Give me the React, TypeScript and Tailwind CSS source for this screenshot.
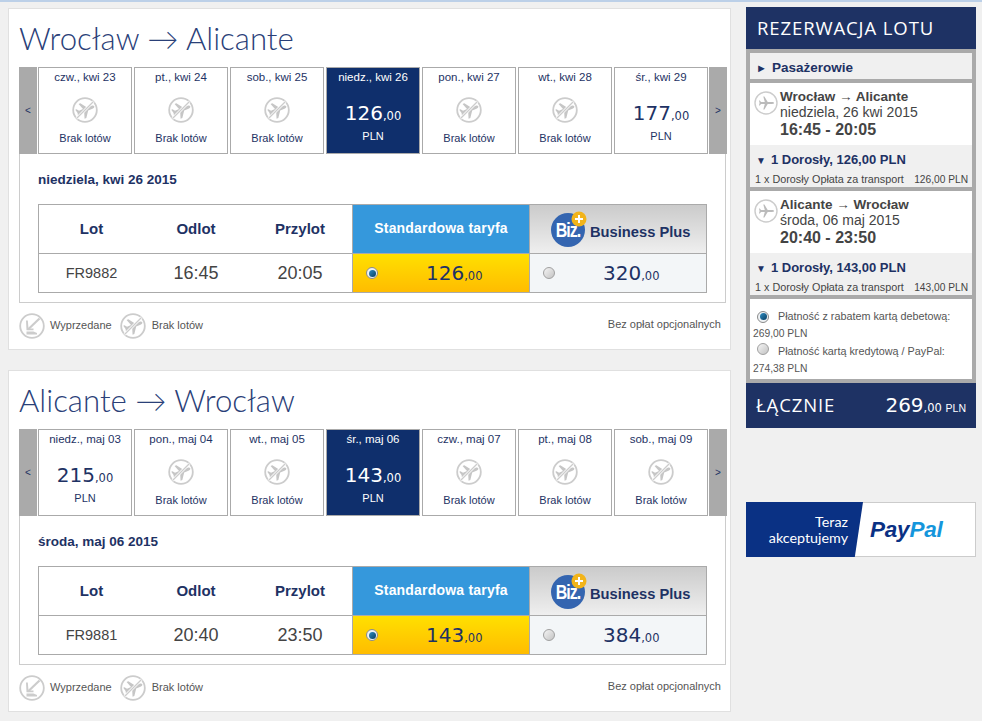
const sans = "font-['Liberation_Sans',Arial,sans-serif]";

function NoFlightIcon({ size = 26 }: { size?: number }) {
  return (
    <svg width={size} height={size} viewBox="0 0 26 26" className="shrink-0">
      <circle cx="13" cy="13" r="11.800" fill="#fff" stroke="#ccc" strokeWidth="1.800" />
      <path
        transform="rotate(-22 13 13)"
        d="M23 13c0-1-1.200-1.600-2.600-1.600h-4.600L11.200 5H9.300l2.200 6.400H7.200L5.400 9.200H4l1 3.800-1 3.800h1.400l1.800-2.200h4.300L9.300 21h1.900l4.600-6.400h4.600C21.800 14.600 23 14 23 13z"
        fill="#c6c6c6"
      />
      <path d="M21.500 4.500 4.500 21.500" stroke="#fff" strokeWidth="2.600" />
      <path d="M21.500 4.500 4.500 21.500" stroke="#ccc" strokeWidth="1.200" />
    </svg>
  );
}

function SoldOutIcon() {
  return (
    <svg width="26" height="26" viewBox="0 0 26 26" className="shrink-0">
      <circle cx="13" cy="13" r="11.800" fill="#fff" stroke="#ccc" strokeWidth="1.800" />
      <path d="M20.500 5.500 9 16.500" stroke="#ccc" strokeWidth="2.200" />
      <path d="M7 7.500h1.800L9.500 15.500h5v1.800H7.500z" fill="#ccc" />
      <path d="M7.500 18.500h7l3.500 1.500v1.500H7.500z" fill="#ccc" />
    </svg>
  );
}

function PlaneIcon() {
  return (
    <svg width="24" height="24" viewBox="0 0 24 24" className="shrink-0">
      <circle cx="12" cy="12" r="11" fill="#fff" stroke="#ccc" strokeWidth="1.400" />
      <path
        d="M20 12c0-.6-.8-.9-1.800-.9h-4.500L10.400 5.500H9.300l1.500 5.600H7L5.800 9.400H5l.6 2.600-.6 2.600h.8L7 12.900h3.800L9.300 18.500h1.100l3.300-5.600h4.500c1 0 1.800-.3 1.800-.9z"
        fill="#bbb"
      />
    </svg>
  );
}

function Radio({ checked }: { checked?: boolean }) {
  return (
    <span
      className={
        checked
          ? "inline-flex w-[12px] h-[12px] shrink-0 items-center justify-center rounded-full border border-[#8a8a8a] bg-[#eef2f5]"
          : "inline-block w-[12px] h-[12px] shrink-0 rounded-full border border-[#a0a0a0] bg-gradient-to-br from-[#f4f4f4] to-[#c4c4c4]"
      }
    >
      {checked && <span className="block w-[7px] h-[7px] rounded-full bg-gradient-to-br from-[#2f8fc4] to-[#0b3f63]" />}
    </span>
  );
}

function Price({ value, dark }: { value: string; dark?: boolean }) {
  return (
    <span className={`font-['DejaVu_Sans',sans-serif] ${dark ? "text-white" : "text-[#1e3264]"}`}>
      <span className="text-[20px] leading-none">{value}</span>
      <span className="text-[11.500px] leading-none">,00</span>
    </span>
  );
}

type Day = { label: string; price?: string; selected?: boolean };

function DayCell({ day }: { day: Day }) {
  const { label, price, selected } = day;
  return (
    <div
      className={`w-[94px] h-[87px] flex flex-col items-center border ${
        selected ? "bg-[#0f2f6c] border-[#aaa] text-white" : "bg-white border-[#aaa] text-[#1e3264]"
      }`}
    >
      <div className="text-[11.500px] leading-[13px] pt-[3px]">{label}</div>
      {price ? (
        <>
          <div className="mt-[19px] h-[24px] flex items-center">
            <Price value={price} dark={selected} />
          </div>
          <div className="mt-[3px] text-[11px] leading-[13px]">PLN</div>
        </>
      ) : (
        <>
          <div className="mt-[13px]">
            <NoFlightIcon />
          </div>
          <div className="mt-[9px] text-[11px] leading-[13px]">Brak lotów</div>
        </>
      )}
    </div>
  );
}

function BizLogo() {
  return (
    <span className="relative block w-[36px] h-[35px] shrink-0">
      <span className="absolute left-0 top-[1px] w-[34px] h-[34px] rounded-full bg-[#3465b0] flex items-center justify-center text-white pt-[3px]">
        <span className="block font-bold text-[16px] leading-none tracking-[-1px] scale-y-125">Biz.</span>
      </span>
      {/* yellow plus badge */}
      <svg width="16" height="16" viewBox="0 0 16 16" className="absolute left-[20px] -top-px">
        <circle cx="8" cy="8" r="7.500" fill="#f2b41a" />
        <path d="M8 4v8M4 8h8" stroke="#fff" strokeWidth="2" />
      </svg>
    </span>
  );
}

type Flight = {
  from: string;
  to: string;
  date: string;
  days: Day[];
  no: string;
  dep: string;
  arr: string;
  std: string;
  biz: string;
};

function FlightCard({ f }: { f: Flight }) {
  return (
    <section className="w-[723px] h-[342px] bg-white border border-[#e0e0e0] pl-[10px]">
      <h2 className="h-[58px] pt-[9px] font-['Lato',sans-serif] font-light text-[31.200px] leading-[40px] text-[#2a4078] whitespace-nowrap">
        {f.from} → {f.to}
      </h2>
      <div className="w-[708px] h-[87px] flex">
        <div className="w-[18px] mr-px bg-[#aaa] flex items-center justify-center text-[10px] text-[#1e3264]">&lt;</div>
        <div className="flex gap-[2px]">
          {f.days.map((d) => (
            <DayCell key={d.label} day={d} />
          ))}
        </div>
        <div className="w-[18px] ml-px bg-[#aaa] flex items-center justify-center text-[10px] text-[#1e3264]">&gt;</div>
      </div>
      <div className="w-[707px] h-[149px] border-x border-b border-[#ccc] pl-[18px]">
        <div className="h-[50px] pt-[19px] text-[13.500px] leading-[14px] font-bold text-[#1e3264]">{f.date}</div>
        <div className="w-[669px] h-[89px] border border-[#aaa] grid grid-cols-[105px_104px_104px_177px_1fr] grid-rows-[49px_1fr]">
          <div className="border-b border-[#aaa] flex items-center justify-center font-bold text-[15px] text-[#1e3264]">Lot</div>
          <div className="border-b border-[#aaa] flex items-center justify-center font-bold text-[15px] text-[#1e3264]">Odlot</div>
          <div className="border-b border-[#aaa] flex items-center justify-center font-bold text-[15px] text-[#1e3264]">Przylot</div>
          <div className="border-b border-l border-[#aaa] bg-[#3598dc] flex items-center justify-center font-bold text-[14px] tracking-[0.2px] text-white pb-[2px]">
            Standardowa taryfa
          </div>
          <div className="border-b border-l border-[#aaa] bg-gradient-to-b from-[#cbcbcb] to-[#efefef] flex items-center pl-[21px] gap-[3px]">
            <BizLogo />
            <span className="font-bold text-[14.700px] text-[#1e3264] mt-[7px]">Business Plus</span>
          </div>
          <div className="flex items-center justify-center text-[14.500px] text-[#444] pt-[1px]">{f.no}</div>
          <div className="flex items-center justify-center text-[18px] text-[#444] pt-[1px]">{f.dep}</div>
          <div className="flex items-center justify-center text-[18px] text-[#444] pt-[1px]">{f.arr}</div>
          <div className="border-l border-[#aaa] bg-gradient-to-b from-[#ffe000] to-[#ffbc00] flex items-center pl-[13px]">
            <Radio checked />
            <span className="ml-[48px] mt-[3px]">
              <Price value={f.std} />
            </span>
          </div>
          <div className="border-l border-[#aaa] bg-[#f3f6f8] flex items-center pl-[13px]">
            <Radio />
            <span className="ml-[48px] mt-[3px]">
              <Price value={f.biz} />
            </span>
          </div>
        </div>
      </div>
      <div className="w-[702px] h-[45px] flex items-center text-[11px] text-[#555]">
        <SoldOutIcon />
        <span className="ml-[5px]">Wyprzedane</span>
        <span className="ml-[8px]">
          <NoFlightIcon />
        </span>
        <span className="ml-[6px]">Brak lotów</span>
        <span className="ml-auto text-[11px] -translate-y-[1px]">Bez opłat opcjonalnych</span>
      </div>
    </section>
  );
}

const outbound: Flight = {
  from: "Wrocław",
  to: "Alicante",
  date: "niedziela, kwi 26 2015",
  no: "FR9882",
  dep: "16:45",
  arr: "20:05",
  std: "126",
  biz: "320",
  days: [
    { label: "czw., kwi 23" },
    { label: "pt., kwi 24" },
    { label: "sob., kwi 25" },
    { label: "niedz., kwi 26", price: "126", selected: true },
    { label: "pon., kwi 27" },
    { label: "wt., kwi 28" },
    { label: "śr., kwi 29", price: "177" },
  ],
};

const inbound: Flight = {
  from: "Alicante",
  to: "Wrocław",
  date: "środa, maj 06 2015",
  no: "FR9881",
  dep: "20:40",
  arr: "23:50",
  std: "143",
  biz: "384",
  days: [
    { label: "niedz., maj 03", price: "215" },
    { label: "pon., maj 04" },
    { label: "wt., maj 05" },
    { label: "śr., maj 06", price: "143", selected: true },
    { label: "czw., maj 07" },
    { label: "pt., maj 08" },
    { label: "sob., maj 09" },
  ],
};

function Leg({ route, date, time, price }: { route: string; date: string; time: string; price: string }) {
  return (
    <div>
      <div className="h-[62px] bg-white flex pl-[4px] pt-[8px]">
        <PlaneIcon />
        <div className="ml-[2px] -mt-[2px] text-[#444]">
          <div className="text-[13.500px] leading-[15px] font-bold">{route}</div>
          <div className="text-[14px] leading-[16px]">{date}</div>
          <div className="text-[16px] leading-[20px] font-bold">{time}</div>
        </div>
      </div>
      <div className="h-[42px] bg-[#f0f0f0] pt-[7px]">
        <div className="pl-[6px] text-[13px] leading-[16px] font-bold text-[#1e3264]">
          <span className="text-[10px] mr-[5px]">▼</span>1 Dorosły, {price} PLN
        </div>
        <div className="flex justify-between pl-[5px] pr-[4px] mt-[4px] leading-[13px] text-[#444]">
          <span className="text-[10.800px]">1 x Dorosły Opłata za transport</span>
          <span className="text-[10.200px]">{price} PLN</span>
        </div>
      </div>
    </div>
  );
}

function Sidebar() {
  return (
    <aside className="w-[230px] ml-[15px] -mt-px">
      <div className="h-[42px] bg-[#1e3264] pl-[11px] pt-[10px] font-['Open_Sans',sans-serif] text-[18.500px] tracking-[0.9px] leading-[22px] text-white whitespace-nowrap">
        REZERWACJA LOTU
      </div>
      <div className="bg-[#aaa] p-[4px] flex flex-col gap-[4px]">
        <div className="h-[26px] bg-[#f0f0f0] flex items-center pl-[6px] pt-[4px] text-[13.500px] font-bold text-[#1e3264]">
          <span className="text-[11px] mr-[5px]">►</span>Pasażerowie
        </div>
        <Leg route="Wrocław → Alicante" date="niedziela, 26 kwi 2015" time="16:45 - 20:05" price="126,00" />
        <Leg route="Alicante → Wrocław" date="środa, 06 maj 2015" time="20:40 - 23:50" price="143,00" />
        <div className="h-[80px] bg-white pl-[3px] pt-[9px] leading-[17px] text-[#555]">
          <div className="flex items-center pl-[4px]">
            <span className="-mt-[4px]">
              <Radio checked />
            </span>
            <span className="ml-[9px] text-[10.800px]">Płatność z rabatem kartą debetową:</span>
          </div>
          <div className="text-[10.300px]">269,00 PLN</div>
          <div className="flex items-center pl-[4px] mt-[1px]">
            <span className="-mt-[4px]">
              <Radio />
            </span>
            <span className="ml-[9px] text-[10.800px]">Płatność kartą kredytową / PayPal:</span>
          </div>
          <div className="text-[10.300px]">274,38 PLN</div>
        </div>
      </div>
      <div className="h-[45px] bg-[#1e3264] text-white flex items-center justify-between pl-[10px] pr-[10px] pb-[2px]">
        <span className="font-['Open_Sans',sans-serif] text-[18.500px] tracking-[0.9px]">ŁĄCZNIE</span>
        <span className="font-['DejaVu_Sans',sans-serif]">
          <span className="text-[20px]">269</span>
          <span className="text-[11.500px]">,00 </span>
          <span className={`${sans} text-[10.500px]`}>PLN</span>
        </span>
      </div>
      <div className="mt-[74px] h-[55px] bg-white border-y border-r border-[#ccc] flex">
        <div className="w-[117px] -my-px bg-[#0a3184] [clip-path:polygon(0_0,100%_0,93%_100%,0_100%)] flex items-center justify-end pr-[15px] text-right text-[14.300px] leading-[16px] text-white font-['Lato',sans-serif] whitespace-nowrap">
          <span>
            Teraz
            <br />
            akceptujemy
          </span>
        </div>
        <div className="flex items-center ml-[7px] font-bold italic text-[22.500px] tracking-[-0.2px]">
          <span className="text-[#0a3184]">Pay</span>
          <span className="text-[#1596dc]">Pal</span>
        </div>
      </div>
    </aside>
  );
}

export default function App() {
  return (
    <div className={`w-[982px] h-[721px] overflow-hidden bg-[#f0f0f0] ${sans}`}>
      <div className="h-[2px] bg-[#bcd0e8]" />
      <div className="flex pl-[8px] pt-[6px]">
        <main className="flex flex-col gap-[20px]">
          <FlightCard f={outbound} />
          <FlightCard f={inbound} />
        </main>
        <Sidebar />
      </div>
    </div>
  );
}
